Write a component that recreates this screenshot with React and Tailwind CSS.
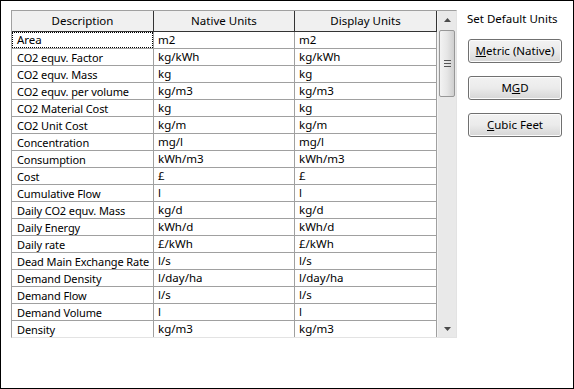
import React from "react";

const rows = [
  ["Area", "m2", "m2"],
  ["CO2 equv. Factor", "kg/kWh", "kg/kWh"],
  ["CO2 equv. Mass", "kg", "kg"],
  ["CO2 equv. per volume", "kg/m3", "kg/m3"],
  ["CO2 Material Cost", "kg", "kg"],
  ["CO2 Unit Cost", "kg/m", "kg/m"],
  ["Concentration", "mg/l", "mg/l"],
  ["Consumption", "kWh/m3", "kWh/m3"],
  ["Cost", "£", "£"],
  ["Cumulative Flow", "l", "l"],
  ["Daily CO2 equv. Mass", "kg/d", "kg/d"],
  ["Daily Energy", "kWh/d", "kWh/d"],
  ["Daily rate", "£/kWh", "£/kWh"],
  ["Dead Main Exchange Rate", "l/s", "l/s"],
  ["Demand Density", "l/day/ha", "l/day/ha"],
  ["Demand Flow", "l/s", "l/s"],
  ["Demand Volume", "l", "l"],
  ["Density", "kg/m3", "kg/m3"],
];

function Arrow({ down }) {
  return (
    <svg viewBox="0 0 7 4" className="h-[4px] w-[7px]" aria-hidden="true">
      <path d={down ? "M0 0h7L3.5 4Z" : "M3.5 0 7 4H0Z"} fill="#4a4a4a" />
    </svg>
  );
}

function Scrollbar() {
  return (
    <div className="flex w-[19px] flex-col border-l border-[#f4f4f4] bg-[#e9e9e9]">
      <div className="flex h-[17px] items-center justify-center">
        <Arrow />
      </div>
      <div className="mx-[1px] mt-[2px] flex h-[67px] flex-col items-center justify-center gap-[2px] rounded-[2px] border border-[#979797] bg-gradient-to-r from-[#f3f3f3] via-[#e6e6e6] to-[#cfcfcf]">
        <div className="h-[1px] w-[7px] bg-[#555]" />
        <div className="h-[1px] w-[7px] bg-[#555]" />
        <div className="h-[1px] w-[7px] bg-[#555]" />
      </div>
      <div className="flex-1" />
      <div className="flex h-[17px] items-center justify-center">
        <Arrow down />
      </div>
    </div>
  );
}

function WinButton({ children }) {
  return (
    <button
      type="button"
      className="h-[24px] w-[94px] rounded-[3px] border border-[#707070] bg-gradient-to-b from-[#f2f2f2] via-[#ebebeb] to-[#d6d6d6] text-center text-black shadow-[inset_0_0_0_1px_#fcfcfc]"
    >
      {children}
    </button>
  );
}

export default function App() {
  return (
    <div className="h-[389px] w-[574px] border border-black bg-white font-['Noto_Sans',sans-serif] text-[11.5px] leading-none text-black">
      <div className="flex pl-[10px] pt-[9px]">
        {/* Grid */}
        <div className="flex h-[328px] w-[446px] border-b border-l border-r border-t border-b-[#e3e3e3] border-l-[#a0a0a0] border-r-[#e3e3e3] border-t-[#a0a0a0]">
          <div className="flex w-[425px] flex-col">
            <div className="grid h-[21px] grid-cols-[142px_141px_142px] border-b border-[#333] bg-[#f0f0f0]">
              <div className="flex items-center justify-center border-r border-[#333]">Description</div>
              <div className="flex items-center justify-center border-r border-[#333]">Native Units</div>
              <div className="flex items-center justify-center border-r border-[#333]">Display Units</div>
            </div>
            {rows.map((r, i) => (
              <div
                key={r[0]}
                className={
                  i === rows.length - 1
                    ? "grid h-[16px] grid-cols-[142px_141px_142px] whitespace-nowrap"
                    : "grid h-[17px] grid-cols-[142px_141px_142px] whitespace-nowrap border-b border-[#a0a0a0]"
                }
              >
                <div className="flex overflow-hidden border-r border-[#a0a0a0]">
                  {i === 0 ? (
                    <div className="flex flex-1 items-center border border-dotted border-black pl-[4px]">{r[0]}</div>
                  ) : (
                    <div className="flex flex-1 items-center pl-[5px] text-[11px] tracking-[-0.1px]">{r[0]}</div>
                  )}
                </div>
                <div className="flex items-center border-r border-[#a0a0a0] pl-[4px]">{r[1]}</div>
                <div className="flex items-center border-r border-[#a0a0a0] pl-[4px]">{r[2]}</div>
              </div>
            ))}
          </div>
          <Scrollbar />
        </div>

        {/* Side panel */}
        <div className="ml-[10px] flex flex-col">
          <div className="pt-[3px]">Set Default Units</div>
          <div className="ml-[1px] mt-[14px] flex flex-col gap-[13px]">
            <WinButton>
              <span className="underline">M</span>etric (Native)
            </WinButton>
            <WinButton>
              M<span className="underline">G</span>D
            </WinButton>
            <WinButton>
              <span className="underline">C</span>ubic Feet
            </WinButton>
          </div>
        </div>
      </div>
    </div>
  );
}
